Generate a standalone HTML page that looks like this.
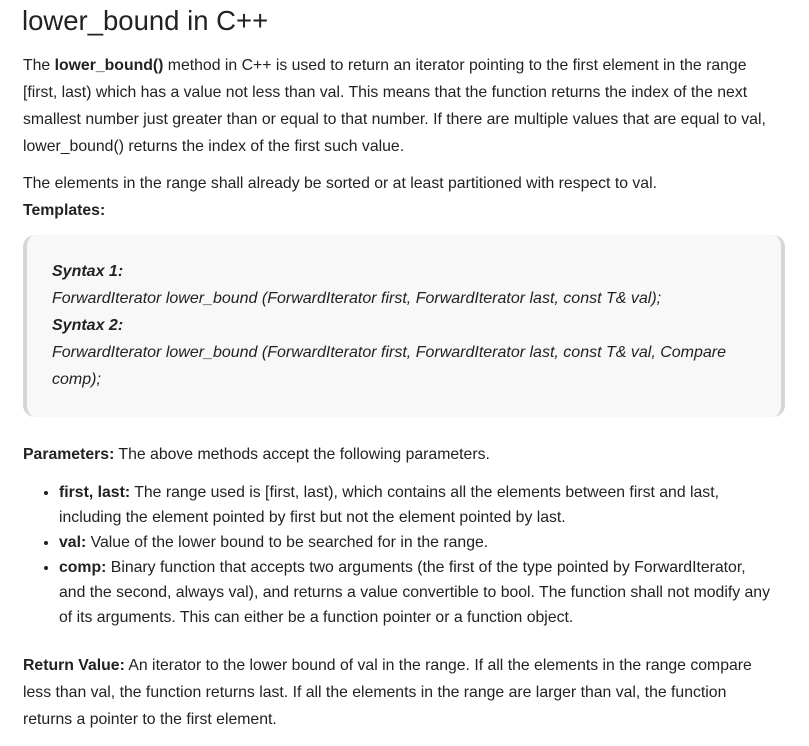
<!DOCTYPE html>
<html><head><meta charset="utf-8"><style>
body{margin:0;background:#fff;width:809px;height:746px;overflow:hidden;font-family:"Liberation Sans",Arial,sans-serif;color:#222;font-size:15.8px;}
.a{position:absolute;left:23px;white-space:nowrap;}
.l{line-height:27px;}
h1{position:absolute;left:22px;top:5px;margin:0;font-weight:normal;font-size:27.5px;color:#222;white-space:nowrap;}
.box{position:absolute;left:23px;top:235px;width:754px;height:182px;background:#f8f8f8;border-left:4px solid #d6d6d6;border-right:4px solid #d6d6d6;border-radius:12px;}
.syn{position:absolute;left:52px;top:258px;line-height:27px;font-style:italic;white-space:nowrap;font-size:16px;}
ul{position:absolute;left:23px;top:480px;margin:0;padding:0 0 0 36px;line-height:25px;white-space:nowrap;}
li{padding-left:0;}
</style></head><body>
<h1>lower_bound in C++</h1>
<div class="a l" style="top:52px">The <b>lower_bound()</b> method in C++ is used to return an iterator pointing to the first element in the range<br>[first, last) which has a value not less than val. This means that the function returns the index of the next<br>smallest number just greater than or equal to that number. If there are multiple values that are equal to val,<br>lower_bound() returns the index of the first such value.</div>
<div class="a l" style="top:170px">The elements in the range shall already be sorted or at least partitioned with respect to val.<br><b>Templates:</b></div>
<div class="box"></div>
<div class="syn"><b>Syntax 1:</b><br>ForwardIterator lower_bound (ForwardIterator first, ForwardIterator last, const T&amp; val);<br><b>Syntax 2:</b><br>ForwardIterator lower_bound (ForwardIterator first, ForwardIterator last, const T&amp; val, Compare<br>comp);</div>
<div class="a l" style="top:441px"><b>Parameters:</b> The above methods accept the following parameters.</div>
<ul>
<li><b>first, last:</b> The range used is [first, last), which contains all the elements between first and last,<br>including the element pointed by first but not the element pointed by last.</li>
<li><b>val:</b> Value of the lower bound to be searched for in the range.</li>
<li><b>comp:</b> Binary function that accepts two arguments (the first of the type pointed by ForwardIterator,<br>and the second, always val), and returns a value convertible to bool. The function shall not modify any<br>of its arguments. This can either be a function pointer or a function object.</li>
</ul>
<div class="a l" style="top:652px"><b>Return Value:</b> An iterator to the lower bound of val in the range. If all the elements in the range compare<br>less than val, the function returns last. If all the elements in the range are larger than val, the function<br>returns a pointer to the first element.</div>
</body></html>
